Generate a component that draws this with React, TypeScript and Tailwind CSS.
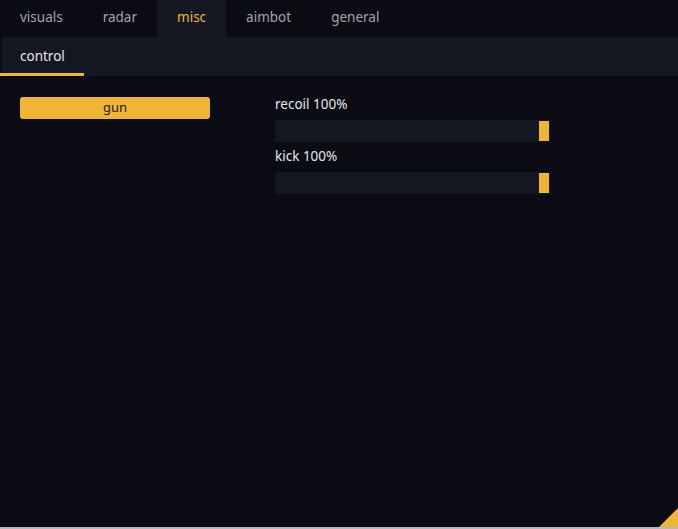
import React from "react";

const tabs = ["visuals", "radar", "misc", "aimbot", "general"];

function Slider({ label }: { label: string }) {
  return (
    <div className="flex flex-col">
      <div className="text-[13.5px] leading-[18px] text-[#e6e6ea] h-[23px] -mt-[2px] mb-[2px]">{label}</div>
      <div className="h-[22px] w-[275px] rounded-[3px] bg-[#141622] flex items-center justify-end pr-[1px]">
        <div className="w-[10px] h-[20px] bg-[#f0b531]" />
      </div>
    </div>
  );
}

export default function App() {
  return (
    <div
      className="w-[678px] h-[529px] flex flex-col bg-[#b9b9c4] overflow-hidden"
      style={{ fontFamily: '"Noto Sans", "Open Sans", sans-serif' }}
    >
      <div className="relative h-[527px] w-full bg-[#0b0c13] flex flex-col">
        <div className="flex h-[37px]">
          {tabs.map((t) => (
            <div
              key={t}
              className={
                "px-[20px] flex items-center text-[13.5px] pb-[3px] " +
                (t === "misc" ? "bg-[#141622] text-[#f0b531]" : "text-[#a3a3ab]")
              }
            >
              {t}
            </div>
          ))}
        </div>
        <div className="h-[39px] ml-[2px] bg-[#141622] flex">
          <div className="-ml-[2px] w-[84px] flex flex-col">
            <div className="flex-1 flex items-center pl-[20px] pt-[2px] text-[13.5px] text-[#e6e6ea]">control</div>
            <div className="h-[3px] bg-[#f0b531]" />
          </div>
        </div>
        <div className="flex pt-[21px] pl-[20px]">
          <div className="w-[190px] h-[22px] rounded-[3px] bg-[#f0b531] flex items-center justify-center text-[13px] text-[#1a1a1a]">
            gun
          </div>
          <div className="ml-[65px] flex flex-col gap-[7px]">
            <Slider label="recoil 100%" />
            <Slider label="kick 100%" />
          </div>
        </div>
        <svg className="absolute right-0 bottom-0" width="19" height="19" viewBox="0 0 19 19">
          <polygon points="19,0 19,19 0,19" fill="#f0b531" />
        </svg>
      </div>
    </div>
  );
}
